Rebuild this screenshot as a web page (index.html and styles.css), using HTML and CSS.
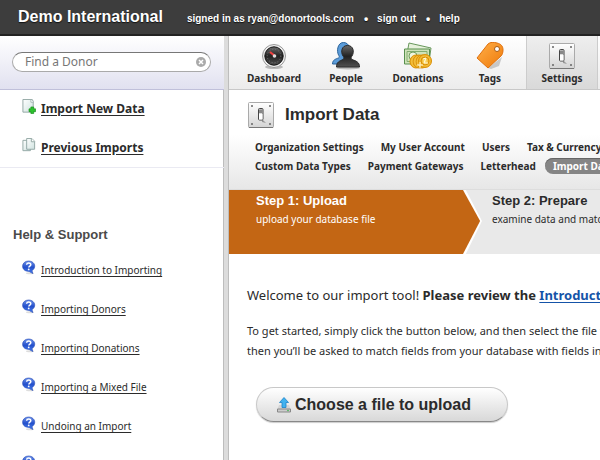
FILE: index.html
```html
<!DOCTYPE html>
<html lang="en">
<head>
<meta charset="utf-8">
<title>Import Data</title>
<link rel="stylesheet" href="styles.css">
</head>
<body>
<svg class="defs" aria-hidden="true">
  <defs>
    <linearGradient id="plate" x1="0" y1="0" x2="0" y2="1"><stop offset="0" stop-color="#fff"/><stop offset="1" stop-color="#d4d4d4"/></linearGradient>
    <linearGradient id="orange" x1="0" y1="0" x2="1" y2="1"><stop offset="0" stop-color="#ffb04a"/><stop offset="1" stop-color="#ee7909"/></linearGradient>
    <linearGradient id="dark" x1="0" y1="0" x2="0" y2="1"><stop offset="0" stop-color="#6a6a6a"/><stop offset=".5" stop-color="#222"/><stop offset="1" stop-color="#505050"/></linearGradient>
    <linearGradient id="blue" x1="0" y1="0" x2="0" y2="1"><stop offset="0" stop-color="#6e93ea"/><stop offset=".5" stop-color="#2450cc"/><stop offset="1" stop-color="#4a80f0"/></linearGradient>
    <linearGradient id="paper" x1="0" y1="0" x2="1" y2="1"><stop offset="0" stop-color="#fff"/><stop offset="1" stop-color="#cfe2df"/></linearGradient>
    <radialGradient id="coin"><stop offset="0" stop-color="#ffe98a"/><stop offset="1" stop-color="#f0b020"/></radialGradient>
    <symbol id="switch" viewBox="0 0 26 26">
      <rect x=".5" y=".5" width="25" height="25" rx="1" fill="url(#plate)" stroke="#aaa"/>
      <path d="M1 25.5h24" stroke="#777"/>
      <g fill="#666"><circle cx="4" cy="4" r="1"/><circle cx="22" cy="4" r="1"/><circle cx="4" cy="22" r="1"/><circle cx="22" cy="22" r="1"/></g>
      <path d="M14 17l4 4-4-1z" fill="#999"/>
      <rect x="10.500" y="6.500" width="4.500" height="11.500" rx="1" fill="#ddd" stroke="#444"/>
      <path d="M11 12h3.500v5.500H11z" fill="#fff"/><path d="M11 7.500h3.500v3.500H11z" fill="#888"/>
    </symbol>
    <symbol id="help" viewBox="0 0 14 14">
      <ellipse cx="8" cy="12.700" rx="4" ry="1" fill="#ddd"/>
      <path d="M6.500.5c3.600 0 6.200 2.200 6.200 5.200 0 2-1.200 3.500-2.700 4.400l.8 3-3.700-2.200C3.400 11 .6 9 .6 5.700.6 2.700 3.200.5 6.500.5z" fill="url(#blue)" stroke="#2448b5" stroke-width=".6"/>
      <path d="M4.600 4.200c.2-2.200 4.200-2.200 4.200.1C8.800 5.700 6.800 5.600 6.800 7" fill="none" stroke="#fff" stroke-width="1.500"/><circle cx="6.700" cy="8.900" r=".9" fill="#fff"/>
    </symbol>
  </defs>
</svg>
<header class="topbar">
  <strong class="brand">Demo International</strong>
  <span>signed in as ryan@donortools.com</span>
  <span class="dot">•</span><a href="#out">sign out</a>
  <span class="dot">•</span><a href="#help">help</a>
</header>
<div class="layout">
  <aside class="sidebar">
    <form class="search">
      <div class="field">
        <input type="text" aria-label="Find a Donor" placeholder="Find a Donor">
        <button type="button" aria-label="Clear"><svg viewBox="0 0 10 10"><circle cx="5" cy="5" r="5" fill="#aaa"/><path d="M3 3l4 4M7 3L3 7" stroke="#fff" stroke-width="1.500"/></svg></button>
      </div>
    </form>
    <ul class="links actions">
      <li><svg viewBox="0 0 14 16"><path d="M.5.500h10l1 2v11.500H.5z" fill="url(#paper)" stroke="#91a6a3"/><path d="M9 .5v3h2.500" fill="#fff" stroke="#91a6a3" stroke-width=".7"/><path d="M9 8.500h3v2h2v3h-2v2H9v-2H7v-3h2z" fill="#2cc22c" stroke="#168c1b" stroke-width=".7"/></svg><a href="#new">Import New Data</a></li>
      <li><svg viewBox="0 0 14 16"><path d="M.5 2.500h8v11h-8z" fill="url(#paper)" stroke="#91a6a3"/><path d="M4.500.500H10l3 3v8.500H4.500z" fill="url(#paper)" stroke="#91a6a3"/><path d="M9.500.500v3.500H13" fill="#fff" stroke="#91a6a3"/></svg><a href="#previous">Previous Imports</a></li>
    </ul>
    <h2>Help &amp; Support</h2>
    <ul class="links">
      <li><svg><use href="#help"/></svg><a href="#h1">Introduction to Importing</a></li>
      <li><svg><use href="#help"/></svg><a href="#h2">Importing Donors</a></li>
      <li><svg><use href="#help"/></svg><a href="#h3">Importing Donations</a></li>
      <li><svg><use href="#help"/></svg><a href="#h4">Importing a Mixed File</a></li>
      <li><svg><use href="#help"/></svg><a href="#h5">Undoing an Import</a></li>
      <li><svg><use href="#help"/></svg><a href="#h6">Updating Existing Data</a></li>
    </ul>
  </aside>
  <main>
    <nav class="tabs">
      <a href="#dashboard"><svg viewBox="0 0 28 28"><ellipse cx="14" cy="25" rx="9" ry="2" fill="#bbb"/><circle cx="14" cy="14" r="11.500" fill="#eee" stroke="#999"/><circle cx="14" cy="14" r="9.200" fill="url(#dark)" stroke="#111"/><circle cx="14" cy="14" r="6.800" fill="none" stroke="#777" stroke-width="1" stroke-dasharray="1 2"/><path d="M10 10l5 4" stroke="#f04040" stroke-width="2.200"/><circle cx="14.500" cy="14" r="1.800" fill="#ddd"/></svg>Dashboard</a>
      <a href="#people"><svg viewBox="0 0 28 28"><path d="M.5 22c0-4 3-5 6-6 1-.5 1-2 0-3-2-4-1-12.500 5-12.500s8 8 5 12.500v9z" fill="#5b9cd9" stroke="#2b639a"/><ellipse cx="16" cy="26" rx="12" ry="1.500" fill="#bbb"/><path d="M4.500 25c0-5 3-6 6.500-7.500 1.500-.7 1-2.500 0-3.500-2.500-4-1.500-10.500 4.500-10.500S22.500 10 20 14c-1 1-1.500 2.800 0 3.500 4 1.500 7.500 2.500 7.500 7.500z" fill="url(#dark)" stroke="#2a2a2a"/></svg>People</a>
      <a href="#donations"><svg viewBox="0 0 28 28"><path d="M5 1l22 5-2 14L2 17z" fill="#e7f1db" stroke="#68985c"/><path d="M.5 7h25v15H.5z" fill="#cfe3b9" stroke="#58904e"/><path d="M3 9.500h20v10H3z" fill="none" stroke="#82ad70"/><circle cx="9" cy="14" r="4" fill="#eff6df" stroke="#71a060"/><g fill="url(#coin)" stroke="#d99008"><ellipse cx="12" cy="19.500" rx="6" ry="6.500"/><ellipse cx="15" cy="19.500" rx="6" ry="6.500"/><ellipse cx="18" cy="19.500" rx="6" ry="6.500"/><circle cx="21" cy="19" r="6.500"/><circle cx="21" cy="19" r="4"/></g><path d="M19 17l3-1-2 5h4M13 23h6m-3-3v6" fill="none" stroke="#fffbe0"/></svg>Donations</a>
      <a href="#tags"><svg viewBox="0 0 28 28"><path d="M12 26L26 15l-3 9-8 3z" fill="#aaa" opacity=".6"/><path d="M1 16L12 2c2-2 6-2 9-1 4 1 6 3 6 7 0 3-1 5-2 6L12 26z" fill="url(#orange)" stroke="#e0700c"/><circle cx="21" cy="7" r="2.500" fill="#fff" stroke="#a75a12"/></svg>Tags</a>
      <a href="#settings" class="current"><svg class="plate"><use href="#switch"/></svg>Settings</a>
    </nav>
    <section class="heading">
      <h1><svg><use href="#switch"/></svg>Import Data</h1>
      <nav class="subnav">
        <div><a href="#org">Organization Settings</a><a href="#account">My User Account</a><a href="#users">Users</a><a href="#tax">Tax &amp; Currency</a></div>
        <div><a href="#types">Custom Data Types</a><a href="#gateways">Payment Gateways</a><a href="#letterhead">Letterhead</a><a href="#import" class="pill">Import Data</a></div>
      </nav>
    </section>
    <ol class="steps">
      <li class="active"><h3>Step 1: Upload</h3><p>upload your database file</p><svg class="arrow" viewBox="0 0 20 64" preserveAspectRatio="none"><path d="M0 0h3l17 31L3 64H0z" fill="#fff"/><path d="M0 0l18 31L0 64z" fill="#c36614"/></svg></li>
      <li><h3>Step 2: Prepare</h3><p>examine data and match fields</p></li>
    </ol>
    <section class="content">
      <p class="welcome">Welcome to our import tool! <strong>Please review the <a href="#intro">Introduction to Importing</a></strong></p>
      <p class="lead">To get started, simply click the button below, and then select the file to import,<br>then you’ll be asked to match fields from your database with fields in Donor Tools.</p>
      <button type="button" class="upload"><svg viewBox="0 0 14 16"><path d="M2 8h10l2 5v2H0v-2z" fill="#d5d5d5"/><path d="M.5 12h13v3H.5z" fill="#ccc" stroke="#888"/><circle cx="11" cy="13.500" r=".8" fill="#39b54a"/><path d="M7 .5l4.500 5H9v5H5v-5H2.500z" fill="#41b2ef" stroke="#1c83c9" stroke-width=".8"/></svg>Choose a file to upload</button>
    </section>
  </main>
</div>
</body>
</html>
```
FILE: styles.css
```css
* { box-sizing: border-box; }
body { margin: 0; height: 100vh; overflow: hidden; display: flex; flex-direction: column; background: #fff; color: #2b2b2b; font-family: "Noto Sans", sans-serif; font-size: 10px; line-height: 16px; }
h1, h2, h3, p, ul, ol { margin: 0; padding: 0; }
ul, ol { list-style: none; }
a { color: inherit; }
svg { flex: none; }
.defs { position: absolute; width: 0; height: 0; }
.topbar { display: flex; flex: none; align-items: center; height: 36px; padding: 0 18px; background: #3d3d3d; border-bottom: 2px solid #222; color: #fff; font: bold 10px/36px "Liberation Sans", sans-serif; white-space: nowrap; text-shadow: 0 1px 1px #111; }
.topbar span, .topbar a { padding-top: 4px; }
.topbar a { text-decoration: none; }
.brand { margin-right: 24px; font-size: 16px; }
.topbar .dot { margin: 0 9px 0 10px; font-size: 12px; }
.layout { display: grid; grid-template-columns: 229px minmax(0, 1fr); flex: 1; min-height: 0; }
.sidebar { border-right: 4px solid #dcdcdc; box-shadow: inset -1px 0 #bdbdbd, 1px 0 #bdbdbd; margin-right: 1px; overflow: hidden; }
.search { height: 54px; padding: 16px 13px 0 12px; background: linear-gradient(#fff, #e1e1f0); border-bottom: 1px solid #c0c0da; }
.field { display: flex; align-items: center; height: 20px; padding: 0 4px 0 12px; border: 1px solid #aaa; border-top-color: #777; border-radius: 10px; background: #fff; }
.field input { flex: 1; min-width: 0; padding: 0; border: 0; outline: 0; background: none; font: 12px/16px "Noto Sans", sans-serif; }
.field input::placeholder { color: #777; opacity: 1; }
.field button { display: flex; padding: 0; border: 0; background: none; }
.field svg { width: 10px; height: 10px; }
.links { padding-left: 22px; }
.links li { display: flex; gap: 5px; height: 39px; white-space: nowrap; }
.links svg { width: 14px; height: 15px; }
.actions { height: 78px; padding-top: 9px; border-bottom: 1px solid #eaeaf2; font-size: 12px; font-weight: bold; }
.links a { padding-top: 2px; text-underline-offset: 2px; }
.sidebar h2 { padding: 58px 0 17px 13px; color: #4a4a4a; font: bold 13px/17px "Liberation Sans", sans-serif; }
main { overflow: hidden; white-space: nowrap; }
.tabs { display: flex; height: 54px; padding-left: 9px; background: linear-gradient(#fff, #ececec); border-bottom: 1px solid #c8c8c8; }
.tabs a { display: flex; flex: none; flex-direction: column; align-items: center; width: 72px; padding-top: 6px; font-weight: bold; text-decoration: none; }
.tabs svg { width: 28px; height: 28px; }
.tabs .plate { width: 26px; height: 28px; }
.tabs .current { background: linear-gradient(#eee, #d9d9d9); border: 1px solid #ccc; border-width: 0 1px; }
.heading { height: 100px; padding: 12px 0 0 19px; background: linear-gradient(#fff 45%, #e7e7e7); border-bottom: 1px solid #ddd; }
h1 { display: flex; align-items: center; gap: 11px; height: 26px; font: bold 17px/26px "Liberation Sans", sans-serif; }
h1 svg { width: 26px; height: 26px; }
.subnav { padding: 9px 0 0 7px; font-weight: bold; }
.subnav div { display: flex; gap: 17px; height: 19px; align-items: center; }
.subnav a { text-decoration: none; }
.subnav .pill { margin-left: -8px; padding: 0 8px; border-radius: 8px; background: #858585; box-shadow: inset 0 1px #666; color: #fff; }
.steps { display: flex; height: 64px; background: #e9e9e9; }
.steps li { position: relative; flex: none; padding: 2px 0 0 29px; }
.steps .active { width: 234px; padding-left: 27px; background: #c36614; color: #fff; }
.steps h3 { font: bold 13px/18px "Liberation Sans", sans-serif; }
.steps p { margin-top: 1px; }
.arrow { position: absolute; left: 100%; top: 0; width: 19px; height: 64px; }
.content { padding: 31px 18px; }
.welcome { font-size: 13px; line-height: 20px; }
.welcome a { color: #1554a8; text-underline-offset: 2px; }
.lead { margin-top: 16px; font-size: 11px; line-height: 20px; }
.upload { display: flex; align-items: center; gap: 4px; width: 252px; height: 35px; margin: 26px 0 0 9px; padding: 0 20px; border: 1px solid #c8c8c8; border-bottom-color: #888; border-radius: 18px; background: linear-gradient(#fff, #d8d8d8); color: #2b2b2b; font: bold 16px/20px "Liberation Sans", sans-serif; box-shadow: 0 1px 1px #ccc; }
.upload svg { width: 14px; height: 16px; }
```
